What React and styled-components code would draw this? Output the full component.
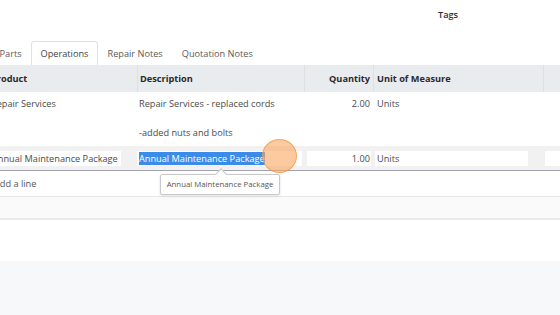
import React from "react";
import styled, { createGlobalStyle } from "styled-components";

const Global = createGlobalStyle`
  html, body { margin: 0; padding: 0; background: #f7f8fa; }
  body { font-family: "Open Sans", "Noto Sans", sans-serif; font-size: 9.2px; color: #4a4a4a; overflow: hidden; }
  * { box-sizing: border-box; }
`;

const Sheet = styled.div`
  width: 560px;
  background: #fff;
  box-shadow: 0 3px 8px rgba(0, 0, 0, 0.07);
  overflow: hidden;
`;

const TopBar = styled.div`
  height: 41px;
  display: flex;
  padding: 7px 0 0 438px;
`;

const FieldLabel = styled.div`
  font-weight: 600;
  color: #2f2f2f;
  line-height: 16px;
`;

const Tabs = styled.div`
  height: 24px;
  display: flex;
  margin-left: -10px;
`;

const Tab = styled.div`
  padding: 0 8.5px;
  line-height: 23px;
  color: ${(p) => (p.$active ? "#444" : "#5a5a5a")};
  border: 1px solid ${(p) => (p.$active ? "#dee2e6" : "transparent")};
  border-bottom: none;
  border-radius: 3px 3px 0 0;
  background: ${(p) => (p.$active ? "#fff" : "transparent")};
`;

const Table = styled.div`
  display: grid;
  grid-template-columns: 149px 167px 69px 170px 1fr;
  margin-left: -12px;
  position: relative;
`;

const HeadCell = styled.div`
  height: 27px;
  background: #e9ecef;
  font-weight: 700;
  color: #2a2a2a;
  display: flex;
  align-items: center;
  justify-content: ${(p) => (p.$right ? "flex-end" : "flex-start")};
  padding: 0 ${(p) => p.$pr ?? 3}px 0 ${(p) => p.$pl ?? 3}px;
  border-left: ${(p) => (p.$sep ? "1px solid #dcdfe3" : "none")};
`;

const Cell = styled.div`
  padding: 5px ${(p) => p.$pr ?? 3}px 5px ${(p) => p.$pl ?? 3}px;
  line-height: 14.5px;
  white-space: pre-line;
  text-align: ${(p) => (p.$right ? "right" : "left")};
  min-height: 53px;
`;

const EditCell = styled.div`
  position: relative;
  height: 25px;
  background: #f1f1f1;
  border-bottom: 1px solid #a2a2b2;
  padding: 5px ${(p) => p.$pr ?? 3}px 0 ${(p) => p.$pl ?? 3}px;
`;

const Input = styled.div`
  height: 15px;
  background: #fff;
  line-height: 15px;
  white-space: nowrap;
  overflow: hidden;
  text-align: ${(p) => (p.$right ? "right" : "left")};
  padding: 0 ${(p) => p.$tr ?? 1}px 0 ${(p) => p.$tl ?? 1}px;
`;

const Selected = styled.span`
  background: #3b8beb;
  color: #fff;
`;

const Cursor = styled.div`
  position: absolute;
  left: 125px;
  top: -7px;
  width: 35px;
  height: 34px;
  border-radius: 50%;
  background: rgba(251, 166, 96, 0.6);
  border: 1.5px solid rgba(243, 150, 70, 0.75);
  z-index: 3;
`;

const Tooltip = styled.div`
  position: absolute;
  left: 23px;
  top: 28px;
  width: 120px;
  height: 21px;
  background: #fff;
  border: 1px solid #c9c9c9;
  border-radius: 2px;
  box-shadow: 0 1px 3px rgba(0, 0, 0, 0.12);
  font-size: 7.8px;
  color: #555;
  line-height: 19px;
  text-align: center;
  white-space: nowrap;
  z-index: 2;
  &::before {
    content: "";
    position: absolute;
    left: 56px;
    top: -5px;
    width: 7px;
    height: 7px;
    background: #fff;
    border-left: 1px solid #c9c9c9;
    border-top: 1px solid #c9c9c9;
    transform: rotate(45deg);
  }
`;

const AddRow = styled.div`
  height: 26px;
  border-bottom: 1px solid #e6e6e6;
  display: flex;
  align-items: center;
  padding-left: 6px;
  margin-left: -12px;
  color: #555;
`;

const Band = styled.div`
  height: 23px;
  background: #fafafa;
  border-bottom: 2px solid #e9ecef;
`;

const Footer = styled.div`
  height: 41px;
  background: #fff;
`;

export default function App() {
  return (
    <>
      <Global />
      <Sheet>
        <TopBar>
          <FieldLabel>Tags</FieldLabel>
        </TopBar>
        <Tabs>
          <Tab>Parts</Tab>
          <Tab $active>Operations</Tab>
          <Tab>Repair Notes</Tab>
          <Tab>Quotation Notes</Tab>
        </Tabs>
        <Table>
          <HeadCell>Product</HeadCell>
          <HeadCell $sep $pl={2}>Description</HeadCell>
          <HeadCell $sep $right>Quantity</HeadCell>
          <HeadCell $sep $pl={3}>Unit of Measure</HeadCell>
          <HeadCell $sep />

          <Cell>Repair Services</Cell>
          <Cell $pl={2}>{"Repair Services - replaced cords\n\n-added nuts and bolts"}</Cell>
          <Cell $right>2.00</Cell>
          <Cell $pl={4}>Units</Cell>
          <Cell />

          <EditCell $pr={16}>
            <Input>Annual Maintenance Package</Input>
          </EditCell>
          <EditCell $pl={0} $pr={2}>
            <Input $tl={2}>
              <Selected>Annual Maintenance Package</Selected>
            </Input>
            <Cursor />
            <Tooltip>Annual Maintenance Package</Tooltip>
          </EditCell>
          <EditCell $pl={3} $pr={2}>
            <Input $right>1.00</Input>
          </EditCell>
          <EditCell $pl={2} $pr={15}>
            <Input $tl={2}>Units</Input>
          </EditCell>
          <EditCell $pl={2} $pr={0}>
            <Input />
          </EditCell>
        </Table>
        <AddRow>Add a line</AddRow>
        <Band />
        <Footer />
      </Sheet>
    </>
  );
}
